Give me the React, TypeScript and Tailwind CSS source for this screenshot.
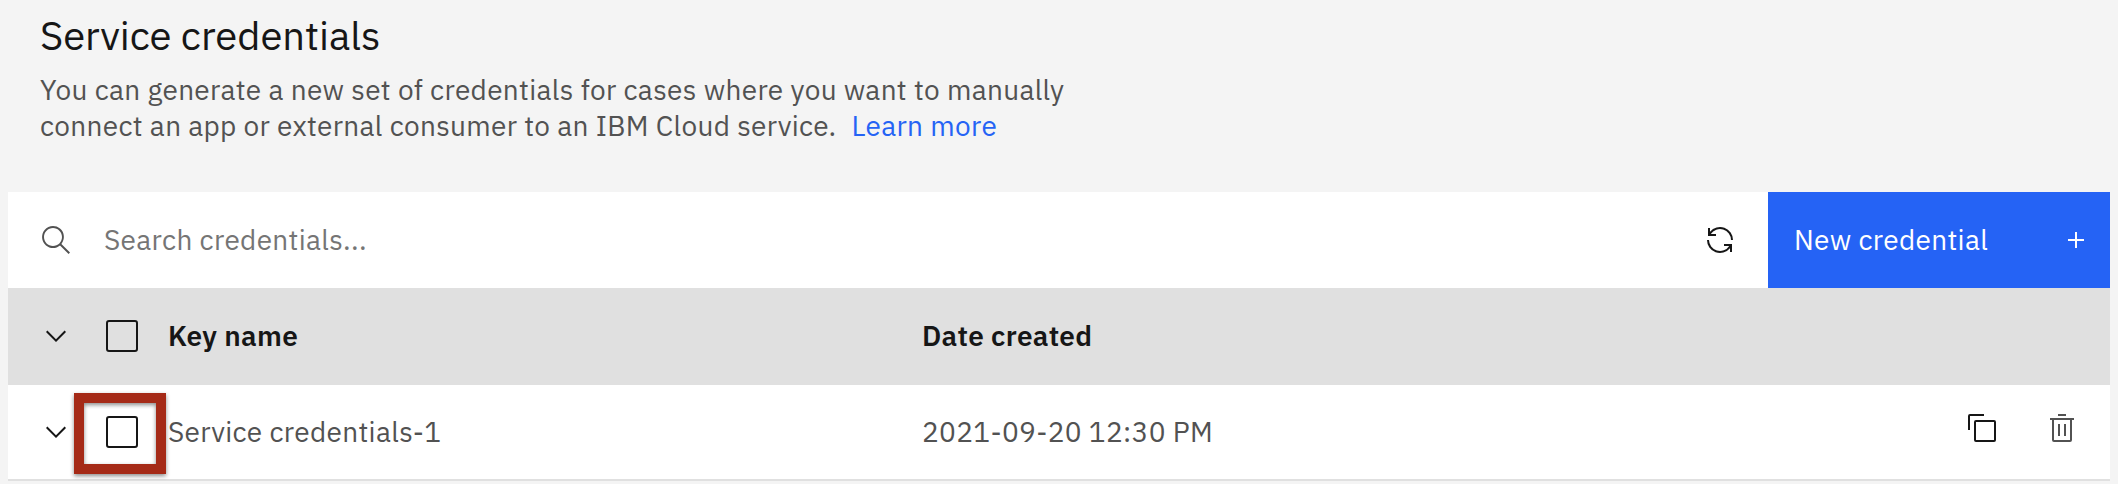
import type { ReactNode } from 'react';

function Icon({ children, className = '' }: { children: ReactNode; className?: string }) {
  return (
    <svg viewBox="0 0 32 32" className={`size-8 shrink-0 fill-current ${className}`} aria-hidden="true">
      {children}
    </svg>
  );
}

function Chevron() {
  return (
    <svg viewBox="0 0 16 16" className="ml-8 size-8 shrink-0 fill-current" aria-hidden="true">
      <path d="M8 11 3 6l.7-.7L8 9.6l4.3-4.3.7.7z" />
    </svg>
  );
}

function Checkbox() {
  return <span className="block size-8 shrink-0 rounded-[3px] border-2 border-[#161616]" />;
}

export default function App() {
  return (
    <div className="h-[484px] w-[2118px] overflow-hidden bg-[#f4f4f4] font-['IBM_Plex_Sans',Roboto,sans-serif] text-[28px] leading-9 tracking-[0.32px] text-[#525252]">
      <header className="h-48 pl-10 pt-[7px]">
        <h1 className="text-[40px] leading-14 tracking-[-0.05px] text-[#161616]">Service credentials</h1>
        <p className="mt-[9px] whitespace-nowrap">
          You can generate a new set of credentials for cases where you want to manually
          <br />
          connect an app or external consumer to an IBM Cloud service.
          <a className="ml-[15px] text-[#2563f5]">Learn more</a>
        </p>
      </header>

      <main className="mx-2 w-[2102px] whitespace-nowrap">
        <div className="flex h-24 items-center bg-white">
          <svg viewBox="0 0 16 16" className="ml-8 size-8 shrink-0 fill-current" aria-hidden="true">
            <path d="M15 14.3 10.7 10c1.9-2.3 1.6-5.8-.7-7.7S4.2.7 2.3 3 .7 8.8 3 10.7c2 1.7 5 1.7 7 0l4.3 4.3.7-.7zM2 6.5C2 4 4 2 6.5 2S11 4 11 6.5 9 11 6.500 11 2 9 2 6.5z" />
          </svg>
          <span className="ml-8 grow text-[#757575]">Search credentials...</span>
          <Icon className="mr-8 text-[#161616]">
            <path d="M12 10H6.78A11 11 0 0 1 27 16h2A13 13 0 0 0 6 7.68V4H4v8h8zM20 22h5.22A11 11 0 0 1 5 16H3a13 13 0 0 0 23 8.32V28h2v-8h-8z" />
          </Icon>
          <button className="flex h-24 w-[342px] items-center justify-between bg-[#2563f5] pl-[26px] pr-[18px] tracking-[0.32px] text-white">
            New credential
            <Icon>
              <path d="M17 15V8h-2v7H8v2h7v7h2v-7h7v-2z" />
            </Icon>
          </button>
        </div>

        <div className="flex h-[97px] items-center bg-[#e0e0e0] pb-px font-semibold text-[#161616]">
          <Chevron />
          <div className="ml-[34px]">
            <Checkbox />
          </div>
          <span className="ml-[30px] w-[754px]">Key name</span>
          <span>Date created</span>
        </div>

        <div className="flex h-24 items-center border-b-2 border-[#e0e0e0] bg-white">
          <span className="text-[#161616]">
            <Chevron />
          </span>
          <div className="relative ml-[34px]">
            <Checkbox />
            <div className="absolute -left-8 -top-[23px] h-[81px] w-[92px] border-10 border-[#a52a17] drop-shadow-[0_2px_2px_rgba(0,0,0,0.45)]" />
          </div>
          <span className="ml-[30px] w-[754px]">Service credentials-1</span>
          <span className="grow">2021-09-20 12:30 PM</span>
          <Icon className="mb-2 mr-12 text-[#161616]">
            <path d="M28 10v18H10V10h18m0-2H10a2 2 0 0 0-2 2v18a2 2 0 0 0 2 2h18a2 2 0 0 0 2-2V10a2 2 0 0 0-2-2Z" />
            <path d="M4 18H2V4a2 2 0 0 1 2-2h14v2H4Z" />
          </Icon>
          <Icon className="mb-2 mr-8">
            <path d="M12 12h2v12h-2zM18 12h2v12h-2z" />
            <path d="M4 6v2h2v20a2 2 0 0 0 2 2h16a2 2 0 0 0 2-2V8h2V6zm4 22V8h16v20zM12 2h8v2h-8z" />
          </Icon>
        </div>
      </main>
    </div>
  );
}
